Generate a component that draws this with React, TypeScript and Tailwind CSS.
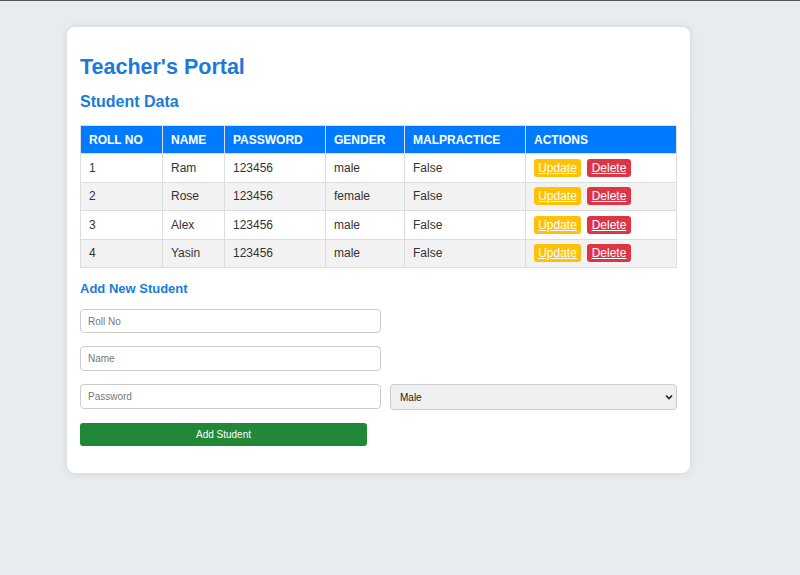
const students = [
  { roll: "1", name: "Ram", password: "123456", gender: "male", malpractice: "False" },
  { roll: "2", name: "Rose", password: "123456", gender: "female", malpractice: "False" },
  { roll: "3", name: "Alex", password: "123456", gender: "male", malpractice: "False" },
  { roll: "4", name: "Yasin", password: "123456", gender: "male", malpractice: "False" },
];

const headers = ["ROLL NO", "NAME", "PASSWORD", "GENDER", "MALPRACTICE", "ACTIONS"];
const colWidths = ["w-[82px]", "w-[62px]", "w-[101px]", "w-[79px]", "w-[121px]", ""];

export default function App() {
  return (
    <div
      className="min-h-[575px] bg-[#e9ecef] border-t border-[#555] pt-[26px] pl-[67px]"
      style={{ fontFamily: '"Liberation Sans", Arial, sans-serif' }}
    >
      <div className="w-[623px] rounded-lg bg-white shadow-[0_0_8px_rgba(0,0,0,0.1)] px-[13px] pt-[27px] pb-[27px]">
        <h1 className="text-[21.5px] leading-[26px] font-bold text-[#1a7bd9]">Teacher's Portal</h1>
        <h2 className="mt-[12px] text-[16px] leading-[20px] font-bold text-[#1a7bd9]">Student Data</h2>

        <table className="mt-[13px] w-full border-collapse text-[12px]">
          <thead>
            <tr className="bg-[#007bff] text-white">
              {headers.map((h, i) => (
                <th
                  key={h}
                  className={`${colWidths[i]} h-[28px] border border-[#dddddd] px-[8px] text-left font-bold`}
                >
                  {h}
                </th>
              ))}
            </tr>
          </thead>
          <tbody className="text-[#333]">
            {students.map((s, i) => (
              <tr key={s.roll} className={i % 2 === 1 ? "bg-[#f2f2f2]" : "bg-white"}>
                <td className="h-[28.5px] border border-[#dddddd] px-[8px]">{s.roll}</td>
                <td className="border border-[#dddddd] px-[8px]">{s.name}</td>
                <td className="border border-[#dddddd] px-[8px]">{s.password}</td>
                <td className="border border-[#dddddd] px-[8px]">{s.gender}</td>
                <td className="border border-[#dddddd] px-[8px]">{s.malpractice}</td>
                <td className="border border-[#dddddd] px-[8px]">
                  <div className="flex gap-[6px]">
                    <button className="h-[18px] w-[47px] rounded-[3px] bg-[#ffc107] text-white underline">
                      Update
                    </button>
                    <button className="h-[18px] w-[44px] rounded-[3px] bg-[#dc3545] text-white underline">
                      Delete
                    </button>
                  </div>
                </td>
              </tr>
            ))}
          </tbody>
        </table>

        <h3 className="mt-[13px] text-[13px] leading-[16px] font-bold text-[#1a7bd9]">Add New Student</h3>

        <div className="mt-[12px] flex flex-col gap-[13px] text-[10px]">
          <input
            placeholder="Roll No"
            className="h-[24px] w-[301px] rounded-[4px] border border-[#cccccc] px-[7px] placeholder:text-[#777]"
          />
          <input
            placeholder="Name"
            className="h-[25px] w-[301px] rounded-[4px] border border-[#cccccc] px-[7px] placeholder:text-[#777]"
          />
          <div className="flex gap-[9px]">
            <input
              placeholder="Password"
              className="h-[25px] w-[301px] rounded-[4px] border border-[#cccccc] px-[7px] placeholder:text-[#777]"
            />
            <div className="relative flex-1">
              <select className="h-[26px] w-full appearance-none rounded-[4px] border border-[#cccccc] bg-[#efefef] px-[9px] text-[10px] text-[#222]">
                <option>Male</option>
                <option>Female</option>
              </select>
              <svg
                className="pointer-events-none absolute right-[4px] top-[9px]"
                width="8"
                height="8"
                viewBox="0 0 8 8"
              >
                <path d="M1 2.5 L4 5.5 L7 2.5" fill="none" stroke="#222" strokeWidth="1.6" />
              </svg>
            </div>
          </div>
          <button className="h-[23px] w-[287px] rounded-[3px] bg-[#218838] text-white">Add Student</button>
        </div>
      </div>
    </div>
  );
}
